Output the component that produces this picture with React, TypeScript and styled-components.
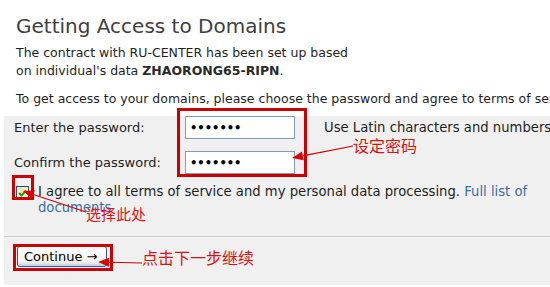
import React from "react";
import styled, { createGlobalStyle } from "styled-components";

const Global = createGlobalStyle`
  html, body { margin: 0; padding: 0; background: #fff; }
  body { font-family: "DejaVu Sans", Verdana, sans-serif; color: #1e1e1e; overflow: hidden; }
  * { box-sizing: border-box; }
`;

const Page = styled.div`
  position: relative;
  width: 550px;
  height: 287px;
  overflow: hidden;
`;

const Intro = styled.div`
  padding: 13px 0 0 16px;
  white-space: nowrap;
`;

const Title = styled.h1`
  margin: 0 0 5px;
  font-size: 20px;
  font-weight: normal;
  color: #404040;
  line-height: 26px;
`;

const Para = styled.p<{ $gap?: number }>`
  margin: 0 0 ${(p) => p.$gap ?? 0}px;
  font-size: 12.5px;
  line-height: 18px;
`;

const Strong = styled.b`
  color: #2a2a2a;
`;

const Panel = styled.div`
  margin: 8px 0 0 4px;
  background: #f0f0f0;
  padding: 0 0 0 10px;
  height: 169px;
  font-size: 13px;
`;

const Fields = styled.div`
  display: grid;
  grid-template-columns: 171px 110px auto;
  row-gap: 12px;
  align-items: center;
  white-space: nowrap;
`;

const Label = styled.label`
  line-height: 16px;
`;

const Input = styled.div`
  height: 23px;
  border: 1px solid #7f9db9;
  background: #fff;
  padding: 0 0 0 4px;
  display: flex;
  align-items: center;
  font-size: 11.5px;
  font-weight: bold;
  color: #000;
`;

const Hint = styled.span`
  line-height: 16px;
  margin-left: 29px;
  font-size: 13.2px;
`;

const AgreeRow = styled.div`
  display: flex;
  align-items: flex-start;
  gap: 9px;
  margin: 10px 0 0 2px;
  line-height: 16px;
  padding-right: 14px;
  font-size: 13.2px;
`;

const Check = styled.span`
  flex: none;
  width: 13px;
  height: 13px;
  margin-top: 2px;
  border: 1px solid #1c5180;
  background: linear-gradient(135deg, #fbe6a8, #fff6d8);
  display: flex;
  align-items: center;
  justify-content: center;
`;

const Link = styled.a`
  color: #3a6ea5;
  text-decoration: none;
`;

const Separator = styled.hr`
  margin: 20px 0 0 -10px;
  border: 0;
  border-top: 1px solid #cacaca;
  height: 0;
`;

const ButtonRow = styled.div`
  padding: 9px 0 0 3px;
`;

const Button = styled.button`
  width: 90px;
  height: 21px;
  padding: 0 0 0 6px;
  border: 1px solid #2a5a9a;
  border-radius: 3px;
  background: linear-gradient(#ffffff, #f4f4f0 70%, #dcdcd6);
  box-shadow: inset 0 -2px 0 #c9d8f0;
  font-family: "DejaVu Sans", Verdana, sans-serif;
  font-size: 13px;
  color: #000;
  text-align: left;
`;

const Box = styled.div`
  position: absolute;
  border: 3px solid #cc0000;
  pointer-events: none;
`;

const Note = styled.span`
  position: absolute;
  font-family: "Noto Sans CJK SC", sans-serif;
  color: #dd1111;
  white-space: nowrap;
  line-height: 1;
`;

const Overlay = styled.svg`
  position: absolute;
  left: 0;
  top: 0;
  pointer-events: none;
`;

function Arrow({ x1, y1, x2, y2 }: { x1: number; y1: number; x2: number; y2: number }) {
  const ang = Math.atan2(y2 - y1, x2 - x1);
  const len = 11;
  const w = 4.5;
  const bx = x2 - len * Math.cos(ang);
  const by = y2 - len * Math.sin(ang);
  const px = -Math.sin(ang) * w;
  const py = Math.cos(ang) * w;
  return (
    <g>
      <line x1={x1} y1={y1} x2={bx} y2={by} stroke="#cc0000" strokeWidth={1.2} />
      <polygon points={`${x2},${y2} ${bx + px},${by + py} ${bx - px},${by - py}`} fill="#dd0000" />
    </g>
  );
}

export default function App() {
  return (
    <Page>
      <Global />
      <Intro>
        <Title>Getting Access to Domains</Title>
        <Para>The contract with RU-CENTER has been set up based</Para>
        <Para $gap={10}>
          on individual's data <Strong>ZHAORONG65-RIPN</Strong>.
        </Para>
        <Para>To get access to your domains, please choose the password and agree to terms of service.</Para>
      </Intro>
      <Panel>
        <Fields>
          <Label>Enter the password:</Label>
          <Input>•••••••</Input>
          <Hint>Use Latin characters and numbers only</Hint>
          <Label>Confirm the password:</Label>
          <Input>•••••••</Input>
          <span />
        </Fields>
        <AgreeRow>
          <Check>
            <svg width="9" height="8" viewBox="0 0 9 8">
              <path d="M1 4 L3.5 6.5 L8 1.5" stroke="#21a121" strokeWidth="2" fill="none" />
            </svg>
          </Check>
          <span>
            I agree to all terms of service and my personal data processing. <Link href="#">Full list of documents</Link>
          </span>
        </AgreeRow>
        <Separator />
        <ButtonRow>
          <Button>Continue →</Button>
        </ButtonRow>
      </Panel>

      <Box style={{ left: 177, top: 108, width: 130, height: 69 }} />
      <Box style={{ left: 12, top: 175, width: 22, height: 25 }} />
      <Box style={{ left: 13, top: 244, width: 100, height: 27 }} />

      <Note style={{ left: 353, top: 137, fontSize: 16 }}>设定密码</Note>
      <Note style={{ left: 86, top: 206, fontSize: 15 }}>选择此处</Note>
      <Note style={{ left: 142, top: 249, fontSize: 16 }}>点击下一步继续</Note>

      <Overlay width={550} height={287}>
        <Arrow x1={353} y1={146} x2={292} y2={158} />
        <Arrow x1={86} y1={212} x2={23} y2={191} />
        <Arrow x1={142} y1={263} x2={98} y2={262} />
      </Overlay>
    </Page>
  );
}
